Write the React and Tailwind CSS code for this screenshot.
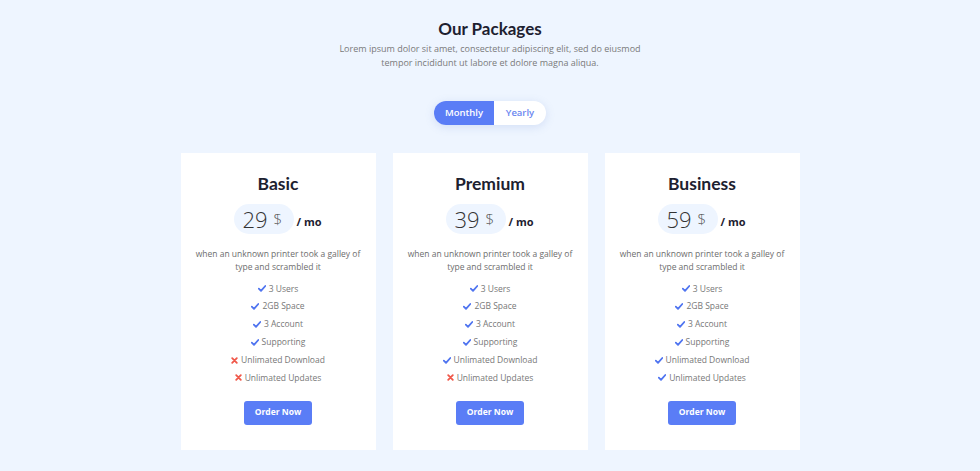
import React from "react";

const plans = [
  { name: "Basic", price: "29", features: [true, true, true, true, false, false] },
  { name: "Premium", price: "39", features: [true, true, true, true, true, false] },
  { name: "Business", price: "59", features: [true, true, true, true, true, true] },
];
const labels = ["3 Users", "2GB Space", "3 Account", "Supporting", "Unlimated Download", "Unlimated Updates"];

function Check() {
  return (
    <svg width="8" height="7" viewBox="0 0 8 7" className="mr-[3px]">
      <path d="M0.8 3.6 L3 5.8 L7.3 1" stroke="#4f74f0" strokeWidth="1.8" fill="none" strokeLinecap="round" strokeLinejoin="round" />
    </svg>
  );
}
function Cross() {
  return (
    <svg width="7" height="7" viewBox="0 0 7 7" className="mr-[3px]">
      <path d="M1.2 1.2 L5.8 5.8 M5.8 1.2 L1.2 5.8" stroke="#f0584a" strokeWidth="1.8" fill="none" strokeLinecap="round" />
    </svg>
  );
}

const head = { fontFamily: "Lato, 'Open Sans', sans-serif" };

export default function App() {
  return (
    <div className="min-h-[471px] bg-[#eef5ff] flex flex-col items-center pt-[17px]" style={{ fontFamily: "'Open Sans', sans-serif" }}>
      <h2 className="text-[17px] leading-[24px] font-bold text-[#1d2130]" style={head}>Our Packages</h2>
      <p className="mt-[1px] w-[310px] text-center text-[9px] leading-[14px] text-[#7a7a7a]">
        Lorem ipsum dolor sit amet, consectetur adipiscing elit, sed do eiusmod tempor incididunt ut labore et dolore magna aliqua.
      </p>
      <div className="mt-[31px] flex h-[24px] rounded-full bg-white shadow-[0_2px_10px_rgba(90,120,200,0.18)] text-[9.5px] font-semibold">
        <div className="w-[60px] flex items-center justify-center rounded-l-full bg-[#5a7df6] text-white">Monthly</div>
        <div className="w-[52px] flex items-center justify-center rounded-r-full text-[#6a86f0]">Yearly</div>
      </div>
      <div className="mt-[28px] flex gap-[17px]">
        {plans.map((p) => (
          <div key={p.name} className="w-[195px] h-[297px] bg-white flex flex-col items-center pt-[20px]">
            <h3 className="text-[17.5px] leading-[22px] font-bold text-[#1d2130]" style={head}>{p.name}</h3>
            <div className="mt-[9px] flex items-center">
              <div className="h-[30px] w-[60px] rounded-full bg-[#eef5ff] flex items-center pl-[8px]">
                <span className="text-[22px] font-light text-[#333] leading-none">{p.price}</span>
                <span className="ml-[6px] text-[15px] font-light text-[#555] leading-none">$</span>
              </div>
              <span className="ml-[2px] mt-[6px] text-[11px] font-bold text-[#1d2130]">/ mo</span>
            </div>
            <p className="mt-[13px] w-[170px] text-center text-[8.5px] leading-[13px] text-[#6d6d6d]">
              when an unknown printer took a galley of type and scrambled it
            </p>
            <ul className="mt-[7px] flex flex-col items-center">
              {labels.map((l, i) => (
                <li key={l} className="h-[17.8px] flex items-center text-[8.5px] text-[#777]">
                  {p.features[i] ? <Check /> : <Cross />}
                  {l}
                </li>
              ))}
            </ul>
            <button className="mt-[14px] w-[68px] h-[24px] rounded-[3px] bg-[#5a7df6] text-white text-[8.5px] font-bold">Order Now</button>
          </div>
        ))}
      </div>
    </div>
  );
}
